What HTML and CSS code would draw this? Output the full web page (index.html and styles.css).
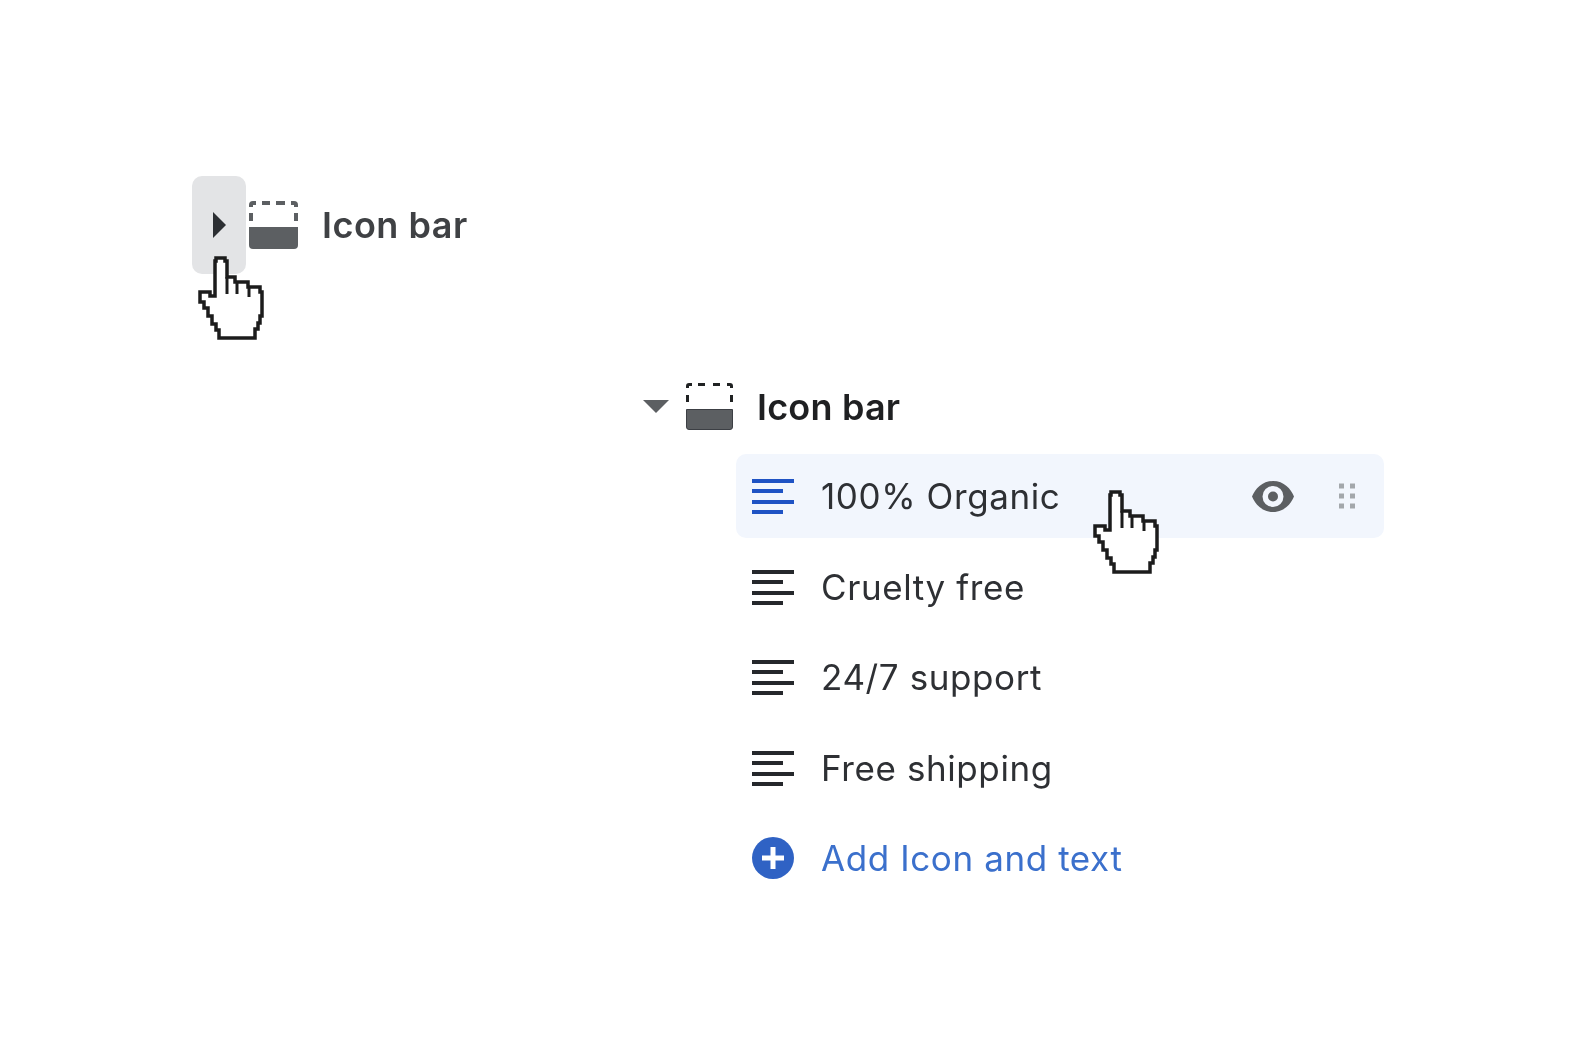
FILE: index.html
```html
<!DOCTYPE html>
<html lang="en">
<head>
    <meta charset="UTF-8">
    <meta name="viewport" content="width=device-width, initial-scale=1.0">
    <title>Icon bar</title>
    <link rel="stylesheet" href="styles.css">
</head>
<body>
    <svg class="defs" width="0" height="0">
        <defs>
            <symbol id="hand" viewBox="0 0 68 86">
                <path fill="#fff" stroke="#1c1c1c" stroke-width="3.5" stroke-linejoin="miter" d="M18 2H27V5H29V21H37V26H50V31H62V36H64V60H62V67H60V73H57V82H21V74H18V68H14V60H10V52H6V46H2V36H12V40H17V5H18Z"/>
                <path fill="none" stroke="#1c1c1c" stroke-width="3" d="M29 21V38M39 26V38M51 31V41"/>
            </symbol>
            <symbol id="lines" viewBox="0 0 42 36">
                <path fill="none" stroke="currentColor" stroke-width="4" d="M0 3H42M0 13H31M0 24H42M0 34H31"/>
            </symbol>
        </defs>
    </svg>

    <div class="page">
        <!-- collapsed state -->
        <div class="section section-closed">
            <div class="toggle">
                <svg class="arrow-right" width="13" height="26" viewBox="0 0 13 26"><path d="M0 0L13 13L0 26Z"/></svg>
                <svg class="cursor" width="68" height="86"><use href="#hand"/></svg>
            </div>
            <svg class="bar-icon" width="49" height="50" viewBox="0 0 49 50">
                <path fill="#5c5f62" d="M0 27H49V45a4 4 0 0 1-4 4H4a4 4 0 0 1-4-4Z"/>
                <path fill="#5c5f62" d="M0 5a4 4 0 0 1 4-4H7V5H4V7H0ZM13 1H21V5H13ZM27 1H36V5H27ZM42 1H45a4 4 0 0 1 4 4V7H45V5H42ZM0 13H4V21H0ZM45 13H49V21H45Z"/>
            </svg>
            <span class="section-title title-muted">Icon bar</span>
        </div>

        <!-- expanded state -->
        <div class="section-open">
            <div class="section">
                <svg class="arrow-down" width="26" height="13" viewBox="0 0 26 13"><path d="M0 0H26L13 13Z"/></svg>
                <svg class="bar-icon" width="47" height="47" viewBox="0 0 47 47">
                    <path fill="#5c5f62" stroke="#3c3f44" stroke-width="1" d="M.5 26.500H46.500V44a2.500 2.500 0 0 1-2.500 2.500H3A2.500 2.500 0 0 1 .5 44Z"/>
                    <path fill="#202223" d="M0 3a3 3 0 0 1 3-3H6V3H3V5H0ZM12 0H19V3H12ZM27 0H34V3H27ZM41 0H44a3 3 0 0 1 3 3V5H44V3H41ZM0 12H3V19H0ZM44 12H47V19H44Z"/>
                </svg>
                <span class="section-title">Icon bar</span>
            </div>
            <ul class="item-list">
                <li class="item item-hover">
                    <svg class="item-icon" width="42" height="36"><use href="#lines"/></svg>
                    <span>100% Organic</span>
                    <svg class="cursor cursor-row" width="68" height="86"><use href="#hand"/></svg>
                    <svg class="eye" width="42" height="31" viewBox="0 0 42 31">
                        <path fill="#5c5f62" fill-rule="evenodd" d="M21 0C32 0 39 8 42 15.500C39 23 32 31 21 31S3 23 0 15.500C3 8 10 0 21 0ZM21 5A10.500 10.500 0 1 0 21 26A10.500 10.500 0 1 0 21 5Z"/>
                        <circle cx="21" cy="15.500" r="5" fill="#5c5f62"/>
                    </svg>
                    <svg class="grip" width="16" height="26" viewBox="0 0 16 26">
                        <path fill="#a3a7ab" d="M0 .5H5V5.500H0ZM11 .5H16V5.500H11ZM0 10.500H5V15.500H0ZM11 10.500H16V15.500H11ZM0 20.500H5V25.500H0ZM11 20.500H16V25.500H11Z"/>
                    </svg>
                </li>
                <li class="item">
                    <svg class="item-icon" width="42" height="36"><use href="#lines"/></svg>
                    <span>Cruelty free</span>
                </li>
                <li class="item">
                    <svg class="item-icon" width="42" height="36"><use href="#lines"/></svg>
                    <span>24/7 support</span>
                </li>
                <li class="item">
                    <svg class="item-icon" width="42" height="36"><use href="#lines"/></svg>
                    <span>Free shipping</span>
                </li>
                <li class="item item-add">
                    <svg class="item-icon" width="42" height="42" viewBox="0 0 42 42">
                        <circle cx="21" cy="21" r="21" fill="#2f62c4"/>
                        <path fill="none" stroke="#fff" stroke-width="5" d="M21 10V32M10 21H32"/>
                    </svg>
                    <span>Add Icon and text</span>
                </li>
            </ul>
        </div>
    </div>
</body>
</html>
```

FILE: styles.css
```css
body {
    margin: 0;
    background-color: #fff;
    font-family: Inter, "Liberation Sans", sans-serif;
    color: #2e3034;
}
.defs {
    display: block;
}
.page {
    padding-top: 176px;
    filter: blur(0.6px); /* the reference is a soft upscale */
}
.section {
    display: flex;
    align-items: center;
}
.section-closed {
    margin-left: 192px;
    height: 98px;
}
.toggle {
    position: relative;
    display: flex;
    align-items: center;
    justify-content: center;
    width: 54px;
    height: 98px;
    background-color: #e3e4e6;
    border-radius: 10px;
    margin-right: 3px;
}
.arrow-right {
    fill: #2c2f33;
}
.arrow-down {
    fill: #5c5f62;
    margin-right: 17px;
}
.cursor {
    position: absolute;
    left: 6px;
    top: 80px;
}
.section-title {
    margin-left: 24px;
    font-size: 36px;
    font-weight: 600;
    letter-spacing: 0.5px;
    color: #1f2022;
}
.section-open .section-title {
    letter-spacing: 0.2px;
}
.title-muted {
    color: #3f4144;
}
.section-open {
    margin-left: 643px;
    margin-top: 109px;
}
.item-list {
    list-style: none;
    margin: 24px 0 0 93px;
    padding: 0;
    width: 648px;
}
.item {
    position: relative;
    display: flex;
    align-items: center;
    height: 84px;
    margin-bottom: 6.5px;
    padding: 0 29px 0 16px;
    font-size: 35px;
    letter-spacing: 0.6px;
    border-radius: 10px;
}
.item-icon {
    color: #25272b;
    margin-right: 27px;
    flex-shrink: 0;
}
.item-hover {
    background-color: #f2f6fd;
}
.item-hover .item-icon {
    color: #1f53c4;
}
.item-add {
    color: #3b70cc;
}
.cursor-row {
    left: 357px;
    top: 36px;
}
.eye {
    margin-left: auto;
    margin-right: 45px;
}
```
